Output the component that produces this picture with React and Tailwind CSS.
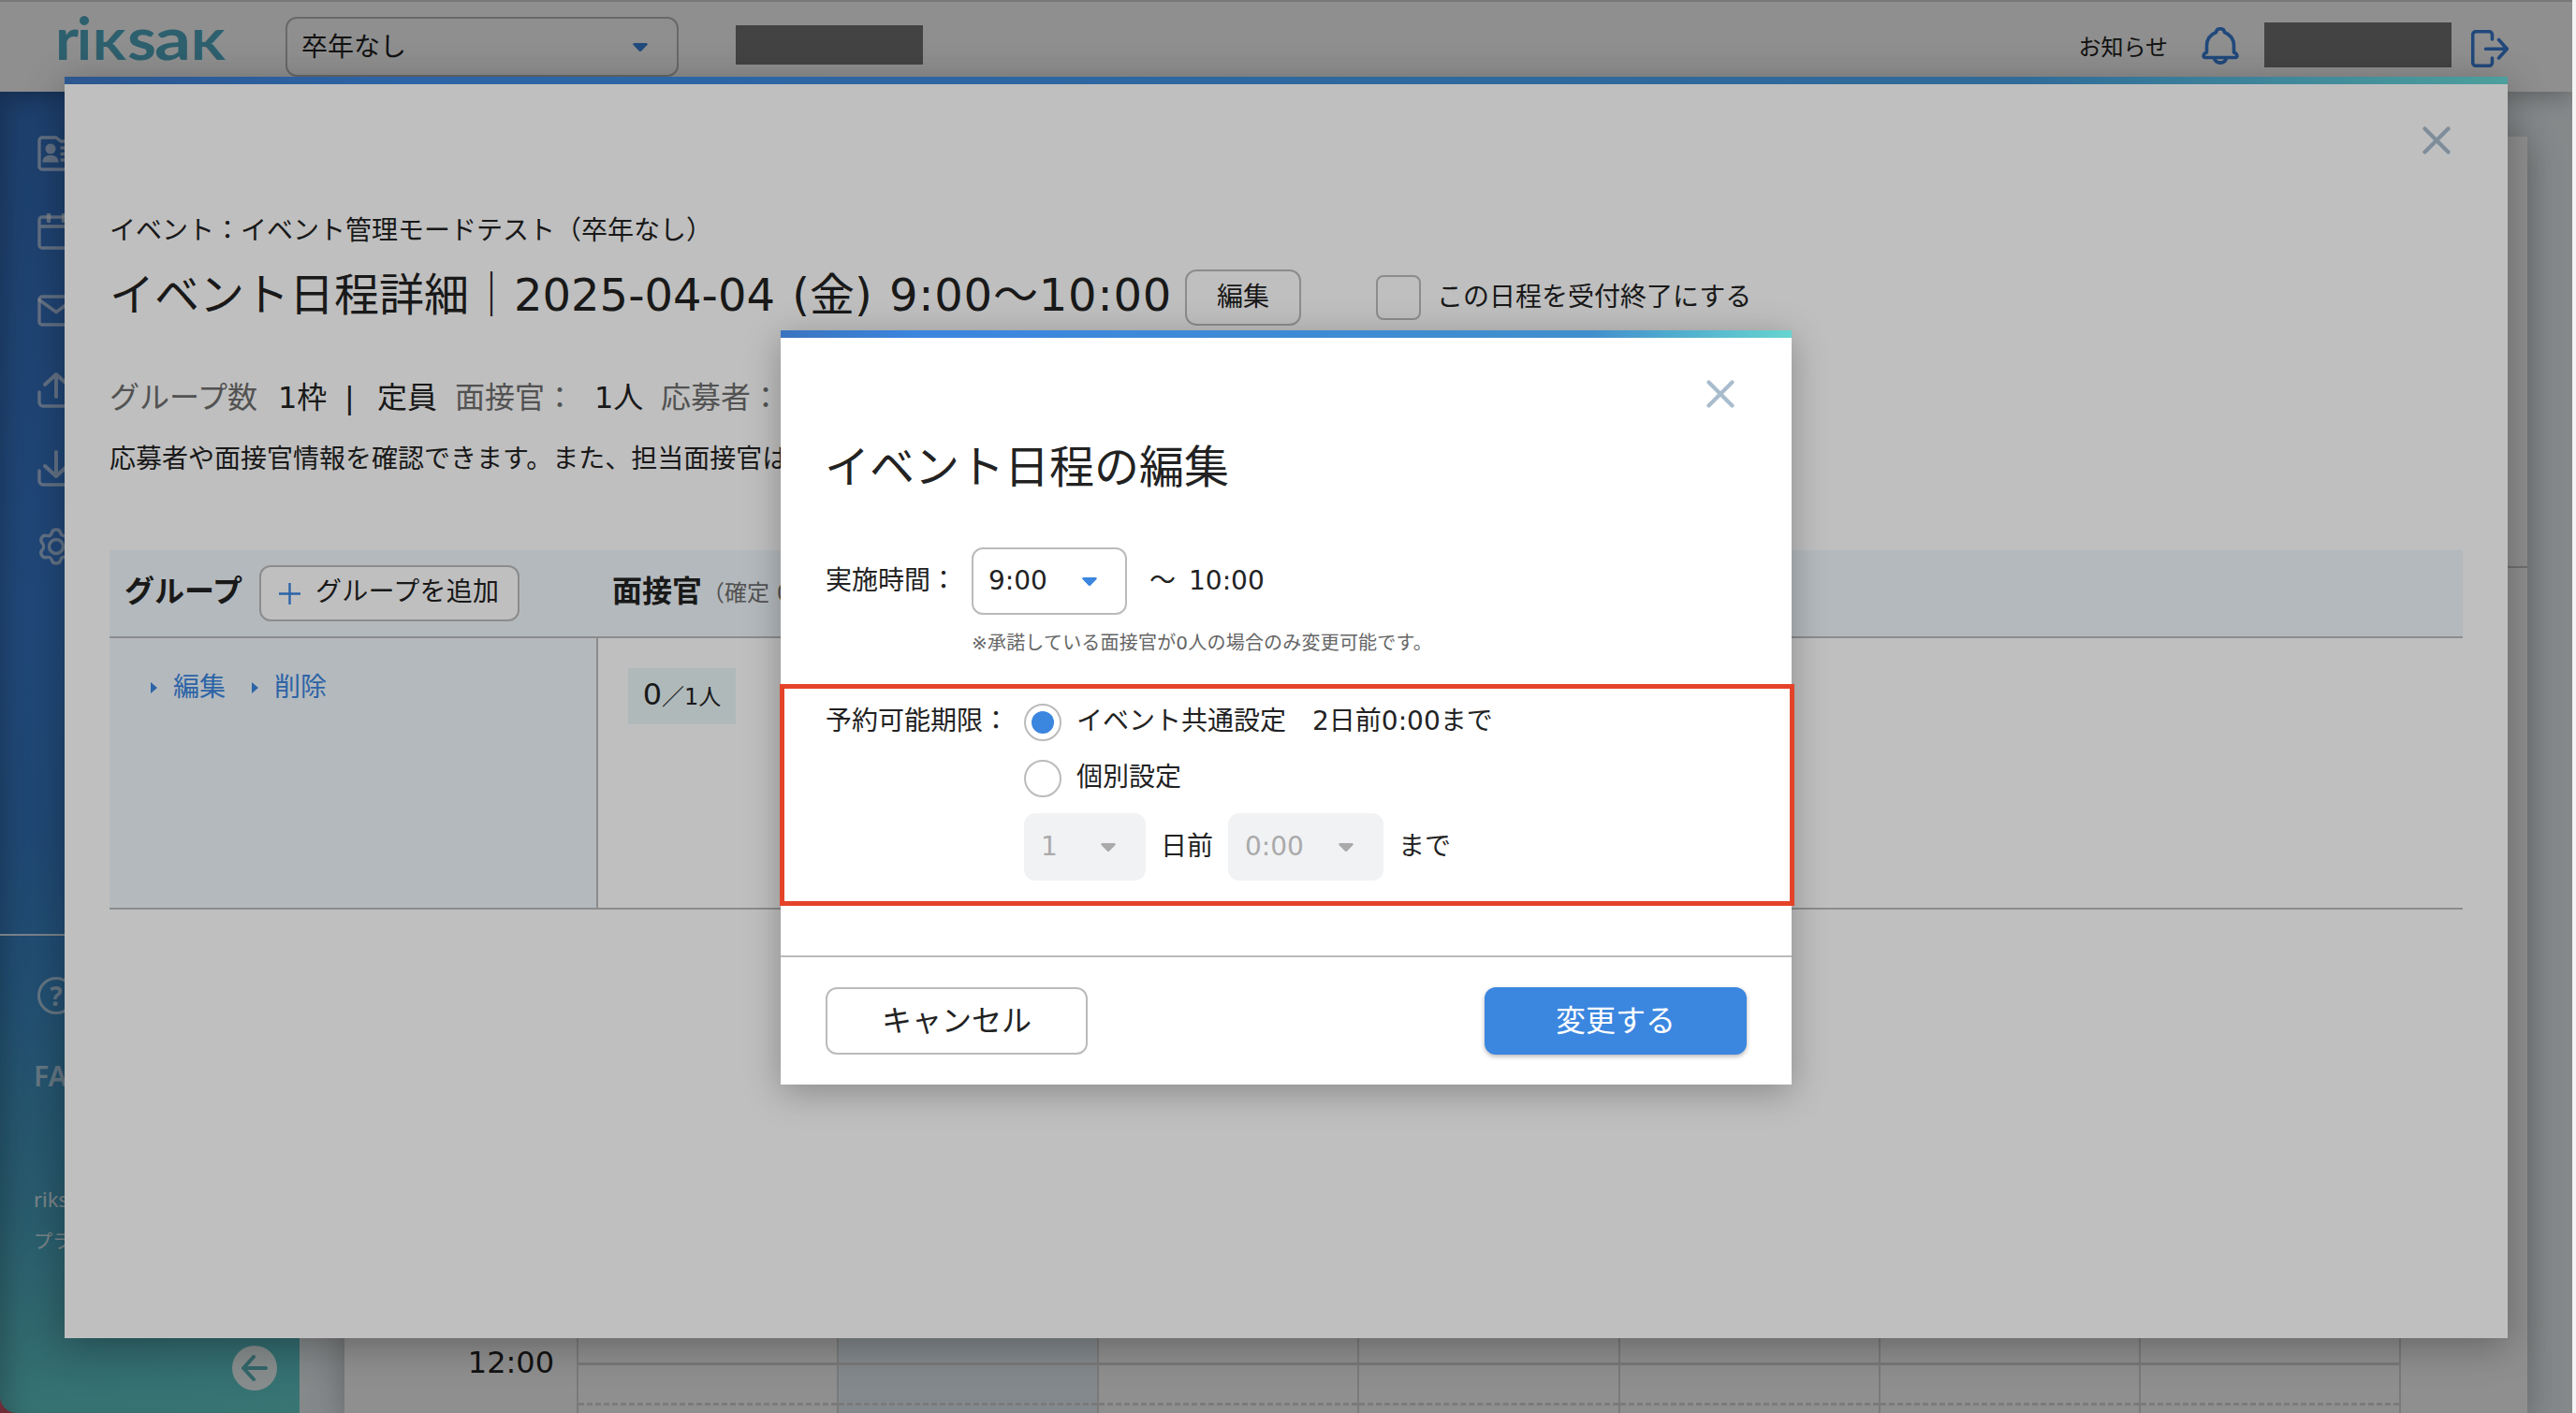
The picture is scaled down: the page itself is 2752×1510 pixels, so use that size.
const sideIcons = [
  // 応募者
  <g key="id">
    <path d="M2 34V6a3 3 0 0 1 3-3h15l5 4h10a3 3 0 0 1 3 3v24a3 3 0 0 1-3 3H5a3 3 0 0 1-3-3z" />
    <circle cx="14" cy="15" r="5.500" fill="currentColor" stroke="none" />
    <path d="M5.500 29.500c0-5.500 3-7.500 8.500-7.500s8.500 2 8.500 7.500z" fill="currentColor" stroke="none" />
    <path d="M26 14h9M26 20.500h9M26 27h9" />
  </g>,
  // 日程
  <g key="calendar">
    <path d="M2 34V7a3 3 0 0 1 3-3h30a3 3 0 0 1 3 3v27a3 3 0 0 1-3 3H5a3 3 0 0 1-3-3zM2 14h36" />
    <path d="M12 1v7M28 1v7" strokeWidth="4.500" />
  </g>,
  // メール
  <g key="mail">
    <path d="M2 32V8a3 3 0 0 1 3-3h30a3 3 0 0 1 3 3v24a3 3 0 0 1-3 3H5a3 3 0 0 1-3-3z" />
    <path d="M2 8.500l18 13 18-13" />
  </g>,
  // アップロード
  <g key="upload">
    <path d="M2 23v11a4 4 0 0 0 4 4h28a4 4 0 0 0 4-4V23" />
    <path d="M20 28V4M8 15L20 4l12 11" strokeWidth="4" />
  </g>,
  // ダウンロード
  <g key="download">
    <path d="M2 23v11a4 4 0 0 0 4 4h28a4 4 0 0 0 4-4V23" />
    <path d="M20 3v25M8 18l12 11 12-11" strokeWidth="4" />
  </g>,
  // 設定
  <g key="gear">
    <circle cx="20" cy="20" r="7.500" />
    <path d="M15.500 5c1-4 8-4 9 0 .8 3 3 4.200 6 3.400 4-1.200 7.500 4.600 4.600 7.600-2.200 2.200-2.200 5.800 0 8 2.900 3-.6 8.800-4.600 7.600-3-.8-5.200.4-6 3.400-1 4-8 4-9 0-.8-3-3-4.200-6-3.400-4 1.200-7.500-4.600-4.600-7.600 2.200-2.200 2.200-5.800 0-8C2 13 5.500 7.200 9.500 8.400c3 .8 5.200-.4 6-3.400z" />
  </g>,
]

const days = [1, 2, 3, 4, 5, 6, 7]

function Caret({ className }){
  return(
    <svg className={className} width="16" height="9" viewBox="0 0 16 9" fill="currentColor">
      <path d="M1.500 0h13a1.300 1.300 0 0 1 1 2.100L9.200 8.400a1.700 1.700 0 0 1-2.400 0L.5 2.100A1.300 1.300 0 0 1 1.500 0z" />
    </svg>
  )
}

function CloseIcon(){
  return(
    <svg className="text-[#a8bccd]" width="30" height="30" viewBox="0 0 30 30" fill="none" stroke="currentColor" strokeWidth="4.200" strokeLinecap="round">
      <path d="M2.500 2.500l25 25M27.500 2.500l-25 25" />
    </svg>
  )
}

function TopBar(){
  return <div className="h-2 shrink-0 bg-[linear-gradient(90deg,#3b74bf_0%,#3b86df_14%,#408fcd_80%,#66d5d0_100%)]" />
}

function Logo(){
  return(
    <svg width="196" height="80" viewBox="0 0 196 80" className="ml-[54px] shrink-0 text-[#52abc5]" fill="currentColor">
      <g className="font-['Lato'] text-[63px] font-bold">
        <text x="5" y="62" textLength="25" lengthAdjust="spacingAndGlyphs">r</text>
        <text x="28" y="62">i</text>
        <text x="45" y="62" textLength="35" lengthAdjust="spacingAndGlyphs" className="text-[44px] font-black uppercase">k</text>
        <text x="82" y="62" textLength="31" lengthAdjust="spacingAndGlyphs">s</text>
        <text x="111" y="62" textLength="39" lengthAdjust="spacingAndGlyphs">a</text>
        <text x="150" y="62" textLength="36" lengthAdjust="spacingAndGlyphs" className="text-[44px] font-black uppercase">k</text>
      </g>
    </svg>
  )
}

function Header(){
  return(
    <header className="relative z-10 flex h-[98px] shrink-0 border-t-2 border-[#d8d8d8] bg-white shadow-[0_4px_24px_rgba(0,0,0,0.3)]">
      <Logo />
      <div className="ml-[55px] mt-4 flex h-16 w-[420px] shrink-0 items-center rounded-xl border-2 border-[#bbb] pl-[15px]">
        <div className="flex-1 pt-[2px] text-[28px] leading-[36px]">卒年なし</div>
        <Caret className="mr-[31px] text-[#3b86df]" />
      </div>
      <div className="ml-[61px] mt-[25px] h-[42px] w-[200px] bg-[#797979]" />
      <div className="ml-auto mt-[31px] text-[24px] leading-[36px]">お知らせ</div>
      <svg className="ml-[36px] mt-[27px] text-[#3b82dd]" width="40" height="40" viewBox="0 0 40 40" fill="none" stroke="currentColor" strokeWidth="3.600" strokeLinejoin="round">
        <path d="M15.500 5.500c.5-5 8.500-5 9 0C32 8.500 34.500 14 34.500 20v7c3.500 1 4.800 5.500 1.500 5.500H4c-3.300 0-2-4.500 1.500-5.500v-7c0-6 2.500-11.500 10-14.500z" />
        <path d="M13.500 33c1.500 6.800 11.500 6.800 13 0" />
      </svg>
      <div className="ml-[27px] mt-[22px] h-12 w-[200px] bg-[#797979]" />
      <svg className="ml-[21px] mr-[68px] mt-[30px] text-[#3b82dd]" width="40" height="40" viewBox="0 0 40 40" fill="none" stroke="currentColor" strokeWidth="3.600" strokeLinecap="round" strokeLinejoin="round">
        <path d="M22.500 10V5a3.300 3.300 0 0 0-3.300-3.300H5A3.300 3.300 0 0 0 1.700 5v30A3.300 3.300 0 0 0 5 38.300h14.200a3.300 3.300 0 0 0 3.300-3.300v-5" />
        <path d="M15.500 20.300H38M29.500 10.500l8.800 9.800-8.800 9.700" />
      </svg>
    </header>
  )
}

function Sidebar(){
  return(
    <nav className="flex w-80 shrink-0 flex-col overflow-hidden rounded-bl-[18px] bg-[linear-gradient(175deg,#3572c2_0%,#3b80d8_38%,#3a80cf_55%,#3c8acb_65%,#49a3c2_83%,#58bcc6_93%,#66d3cf_100%)] text-white/60 shadow-[inset_24px_0_24px_-16px_rgba(0,0,0,0.2)]">
      <div className="flex h-[902px] shrink-0 flex-col border-b-2 border-white/80 pl-10 pt-6">
        {sideIcons.map((icon, i)=>
          <div key={i} className="flex h-[84px] items-center">
            <svg width="40" height="40" viewBox="0 0 40 40" fill="none" stroke="currentColor" strokeWidth="3.400" strokeLinecap="round" strokeLinejoin="round">
              {icon}
            </svg>
          </div>
        )}
      </div>
      <div className="ml-10 mt-[44px] flex size-10 shrink-0 items-center justify-center rounded-full border-[3px] border-white/60 font-['Noto_Sans'] text-[28px] font-bold leading-none">?</div>
      <div className="ml-[36px] mt-[48px] font-['Noto_Sans'] text-[30px] font-semibold leading-[36px]">FAQ</div>
      <div className="ml-[36px] mt-[98px] whitespace-nowrap font-['Noto_Sans'] text-[22px] leading-[30px] text-white/80">riksak利用規約</div>
      <div className="ml-[36px] mt-[15px] whitespace-nowrap text-[20px] leading-[32px] text-white/80">プライバシーポリシー</div>
      <div className="ml-[248px] mt-[95px] flex size-12 shrink-0 items-center justify-center rounded-full bg-[#f1fbfb]">
        <svg width="28" height="28" viewBox="0 0 28 28" fill="none" stroke="#5cb7bd" strokeWidth="4" strokeLinecap="round" strokeLinejoin="round">
          <path d="M26 14H2M13 2L2 14l11 12" />
        </svg>
      </div>
    </nav>
  )
}

function Calendar(){
  return(
    <main className="flex flex-1 bg-[#eef4f7] pl-12 pr-12 pt-12">
      <div className="flex flex-1 flex-col bg-white shadow-[0_8px_36px_rgba(0,0,0,0.28)]">
        <div className="h-[461px] border-b-2 border-[#c8c8c8]" />
        <div className="flex flex-1 pr-[135px]">
          <div className="flex w-[248px] flex-col items-end justify-end pb-[32px] pr-[24px]">
            <div className="text-[32px] leading-[44px]">12:00</div>
          </div>
          <div className="grid flex-1 grid-cols-7 border-r-2 border-[#dadada]">
            {days.map((d)=>
              <div key={d} className={d == 2 ? "flex flex-col justify-end border-l-2 border-[#dadada] bg-[#eaf4fb]" : "flex flex-col justify-end border-l-2 border-[#dadada]"}>
                <div className="h-[46px] border-b-[3px] border-t-[3px] border-[#d8d8d8] border-b-[#dadada] [border-bottom-style:dashed]" />
                <div className="h-2" />
              </div>
            )}
          </div>
        </div>
      </div>
    </main>
  )
}

function DetailModal(){
  return(
    <div className="absolute left-[69px] top-[82px] z-20 flex h-[1348px] w-[2610px] flex-col bg-white shadow-[0_8px_40px_rgba(0,0,0,0.3)]">
      <TopBar />
      <div className="flex justify-end pr-[61px] pt-[45px]"><CloseIcon /></div>
      <div className="flex flex-col whitespace-nowrap px-12 pt-[62px]">
        <div className="text-[28px] leading-[40px]">イベント：イベント管理モードテスト（卒年なし）</div>
        <div className="mt-[19px] flex h-[64px] items-center">
          <div className="w-[1149px] pb-[6px] text-[48px] leading-[64px] [word-spacing:3px]">イベント日程詳細｜2025-04-04 (金) <span className="tracking-[0.8px]">9:00〜10:00</span></div>
          <div className="flex h-[60px] w-[124px] items-center justify-center rounded-xl border-2 border-[#bbb] text-[28px] leading-[36px]">編集</div>
          <div className="ml-20 size-12 rounded-lg border-2 border-[#bbb]" />
          <div className="ml-[17px] text-[28px] leading-[36px]">この日程を受付終了にする</div>
        </div>
        <div className="mt-[51px] flex text-[32px] leading-[48px]">
          <div className="w-[180px] text-[#6e6e6e]">グループ数</div>
          <div className="w-[71px]">1枠</div>
          <div className="w-[35px]">|</div>
          <div className="w-[83px]">定員</div>
          <div className="w-[149px] text-[#6e6e6e]">面接官：</div>
          <div className="w-[71px]">1人</div>
          <div className="text-[#6e6e6e]">応募者：</div>
        </div>
        <div className="mt-[22px] text-[28px] leading-[40px]">応募者や面接官情報を確認できます。また、担当面接官は</div>
        <div className="mt-[77px] flex h-[94px] items-center border-b-2 border-[#bbb] bg-[#f0f7fc] pl-4">
          <div className="w-36 pb-1 text-[32px] font-bold leading-[44px]">グループ</div>
          <div className="flex h-[60px] w-[278px] items-center rounded-xl border-2 border-[#bbb] bg-white pl-[19px]">
            <svg className="mr-4 text-[#3b86df]" width="23" height="23" viewBox="0 0 23 23" stroke="currentColor" strokeWidth="2.400">
              <path d="M11.500 0v23M0 11.500h23" />
            </svg>
            <div className="pb-[3px] text-[28px] leading-[36px] tracking-[0.3px]">グループを追加</div>
          </div>
          <div className="ml-[99px] pb-1 text-[32px] font-bold leading-[44px]">面接官</div>
          <div className="text-[24px] leading-[36px] text-[#6e6e6e]">（確定 0</div>
        </div>
        <div className="flex h-[290px] border-b-2 border-[#bbb]">
          <div className="flex w-[522px] items-start border-r-2 border-[#bbb] bg-[#f0f7fc] pl-11 pt-[33px] text-[28px] leading-[40px] text-[#3b86df]">
            <svg className="mr-[17px] mt-[14px]" width="7" height="12" viewBox="0 0 7 12" fill="currentColor"><path d="M0 0l7 6-7 6z" /></svg>
            <div>編集</div>
            <svg className="ml-[28px] mr-[17px] mt-[14px]" width="7" height="12" viewBox="0 0 7 12" fill="currentColor"><path d="M0 0l7 6-7 6z" /></svg>
            <div>削除</div>
          </div>
          <div className="ml-8 mt-8 flex h-[60px] w-[115px] items-baseline justify-center bg-[#ebf7f9] pt-[3px] text-[32px] leading-[50px]">
            0<span className="text-[24px]">／1人</span>
          </div>
        </div>
      </div>
    </div>
  )
}

function EditModal(){
  return(
    <div className="absolute left-[834px] top-[353px] z-40 flex h-[806px] w-[1080px] flex-col whitespace-nowrap bg-white text-[28px] leading-[40px] shadow-[0_8px_36px_rgba(0,0,0,0.28)]">
      <TopBar />
      <div className="flex justify-end pr-[61px] pt-[45px]"><CloseIcon /></div>
      <div className="pl-[47px] pt-[31px] text-[48px] leading-[64px]">イベント日程の編集</div>
      <div className="mt-[54px] flex h-[72px] items-center pl-12">
        <div className="w-[156px]">実施時間：</div>
        <div className="flex h-[72px] w-[166px] items-center rounded-xl border-2 border-[#bbb] pl-[16px]">
          <div className="flex-1">9:00</div>
          <Caret className="mr-[30px] text-[#3b86df]" />
        </div>
        <div className="ml-[24px] w-[42px]">〜</div>
        <div>10:00</div>
      </div>
      <div className="mt-[15px] pl-[204px] text-[20px] leading-[30px] tracking-[0.2px] text-[#666]">※承諾している面接官が0人の場合のみ変更可能です。</div>
      <div className="-ml-px mt-[29px] flex h-[237px] w-[1084px] border-[5px] border-[#e4432a] pl-11 pt-[15px]">
        <div className="w-[212px]">予約可能期限：</div>
        <div className="flex flex-col">
          <div className="flex h-10 items-center">
            <div className="mr-4 mt-[2px] flex size-10 items-center justify-center rounded-full border-2 border-[#bbb]">
              <div className="size-6 rounded-full bg-[#3b86df]" />
            </div>
            イベント共通設定　2日前0:00まで
          </div>
          <div className="mt-5 flex h-10 items-center">
            <div className="mr-4 mt-[2px] size-10 rounded-full border-2 border-[#bbb]" />
            個別設定
          </div>
          <div className="mt-[18px] flex h-[72px] items-center">
            <div className="flex h-[72px] w-[130px] items-center rounded-xl bg-[#f1f2f4] pl-[18px] text-[#aaa]">
              <div className="flex-1">1</div>
              <Caret className="mr-8" />
            </div>
            <div className="w-[88px] pl-4">日前</div>
            <div className="flex h-[72px] w-[166px] items-center rounded-xl bg-[#f1f2f4] pl-[18px] text-[#aaa]">
              <div className="flex-1">0:00</div>
              <Caret className="mr-8" />
            </div>
            <div className="pl-4">まで</div>
          </div>
        </div>
      </div>
      <div className="mt-[53px] flex justify-between border-t-2 border-[#bbb] px-12 pt-8 text-[32px]">
        <div className="flex h-[72px] w-[280px] items-center justify-center rounded-xl border-2 border-[#bbb]">キャンセル</div>
        <div className="flex h-[72px] w-[280px] items-center justify-center rounded-xl bg-[#3b86df] text-white shadow-[0_2px_5px_rgba(0,0,0,0.3)]">変更する</div>
      </div>
    </div>
  )
}

export default function App(){
  return(
    <div className="relative h-[1510px] w-[2752px] overflow-hidden bg-[#f4f4f4] pr-1 font-['DejaVu_Sans','Noto_Sans_CJK_JP',sans-serif] text-[#222]">
      <div className="relative flex h-full w-[2748px] flex-col overflow-hidden bg-[#c05060]">
        <Header />
        <div className="flex min-h-0 flex-1">
          <Sidebar />
          <Calendar />
        </div>
        <div className="absolute inset-0 z-10 bg-black/25" />
        <DetailModal />
        <div className="absolute inset-0 z-30 bg-black/25" />
        <EditModal />
      </div>
    </div>
  )
}
